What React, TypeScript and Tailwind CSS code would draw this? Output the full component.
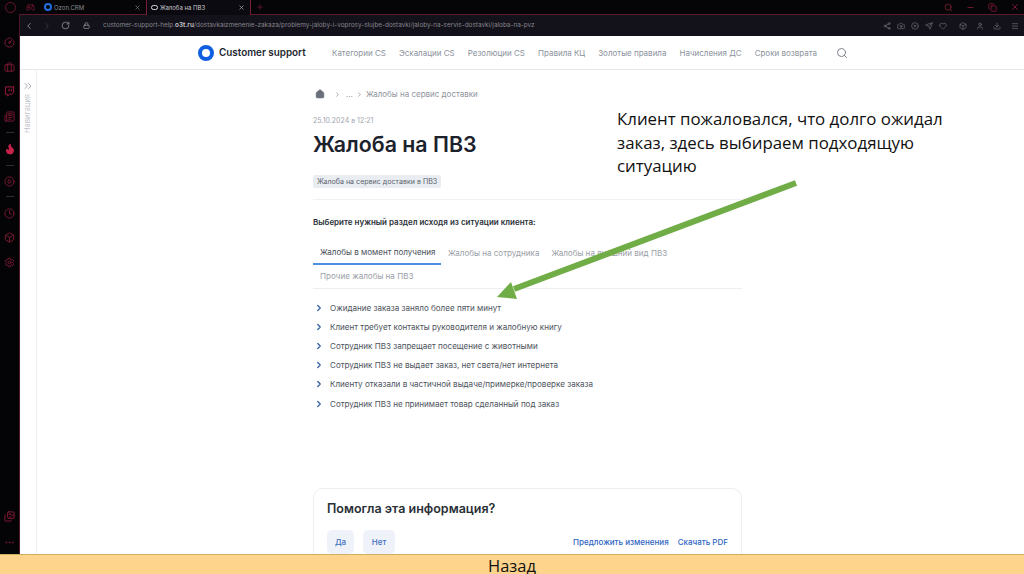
import React from "react";
import { ChevronLeft, ChevronRight, RotateCw, Lock, Search, Share2, Camera, CircleX, Send, Heart, Box, User, Download, Menu, X, Minus, Copy, Plus, Home, ChevronsRight, CircleGauge, Briefcase, Twitch, Newspaper, Flame, CirclePlay, Clock, Settings, Gamepad2, Images, Ellipsis } from "lucide-react";

const nav = ["Категории CS", "Эскалации CS", "Резолюции CS", "Правила КЦ", "Золотые правила", "Начисления ДС", "Сроки возврата"];
const items = [
  "Ожидание заказа заняло более пяти минут",
  "Клиент требует контакты руководителя и жалобную книгу",
  "Сотрудник ПВЗ запрещает посещение с животными",
  "Сотрудник ПВЗ не выдает заказ, нет света/нет интернета",
  "Клиенту отказали в частичной выдаче/примерке/проверке заказа",
  "Сотрудник ПВЗ не принимает товар сделанный под заказ",
];

function Rail() {
  const c = "text-[#7d1a33]";
  return (
    <div className="w-[20px] shrink-0 bg-[#040406] border-r border-[#4a1a2a] flex flex-col items-center pt-[23px]">
      <CircleGauge size={11} className={c} />
      <Briefcase size={11} className={`${c} mt-[13.5px]`} />
      <Twitch size={11} className="text-[#a81c40] mt-[13px]" />
      <Newspaper size={11} className={`${c} mt-[14px]`} />
      <div className="w-[8px] h-px bg-[#2e2e33] mt-[10px]" />
      <Flame size={12} className="text-[#c8234a] fill-[#c8234a] mt-[10px]" />
      <div className="w-[8px] h-px bg-[#2e2e33] mt-[10px]" />
      <CirclePlay size={11} className={`${c} mt-[10px]`} />
      <div className="w-[8px] h-px bg-[#2e2e33] mt-[9.5px]" />
      <Clock size={11} className={`${c} mt-[11px]`} />
      <Box size={11} className={`${c} mt-[13px]`} />
      <Settings size={11} className={`${c} mt-[14px]`} />
      <div className="flex-1" />
      <Images size={11} className="text-[#8a1a36]" />
      <Ellipsis size={11} className={`${c} mt-[15px] mb-[6px]`} />
    </div>
  );
}

export default function App() {
  return (
    <div className="relative w-[1024px] h-[574px] overflow-hidden flex flex-col bg-white font-['Inter',sans-serif]">
      {/* tab strip */}
      <div className="h-[14px] shrink-0 bg-[#050507] flex items-stretch">
        <div className="w-[20px] flex items-center justify-center">
          <div className="w-[11px] h-[11px] rounded-full border border-[#6b1528]" />
        </div>
        <div className="w-[21px] flex items-center justify-center">
          <Gamepad2 size={9} className="text-[#8a1a36]" />
        </div>
        <div className="w-[105px] flex items-center pl-[3px] pr-[5px]">
          <div className="w-[8px] h-[8px] rounded-full border-2 border-[#1f6fe0]" />
          <span className="ml-[2px] text-[6px] text-[#8a8a90] flex-1">Ozon.CRM</span>
          <X size={7} className="text-[#8a8a90]" />
        </div>
        <div className="w-[105px] flex items-center pl-[4px] pr-[5px] border-x border-[#7a1c33] bg-[#0b0a10] -mb-px relative">
          <div className="w-[7px] h-[5px] rounded-full border border-[#d8d8d8]" />
          <span className="ml-[2px] text-[6px] text-[#c8c8cc] flex-1">Жалоба на ПВЗ</span>
          <X size={7} className="text-[#c8c8cc]" />
        </div>
        <div className="w-[17px] flex items-center justify-center">
          <Plus size={8} className="text-[#7d1a33]" />
        </div>
        <div className="flex-1" />
        <div className="flex items-center gap-[13px] pr-[4px] text-[#8f1d3a]">
          <Search size={9} />
          <Minus size={9} />
          <Copy size={9} />
          <X size={10} />
        </div>
      </div>
      <div className="flex-1 flex min-h-0">
        <Rail />
        <div className="flex-1 flex flex-col min-w-0">
          {/* address bar */}
          <div className="h-[22px] shrink-0 bg-[#13111a] border-t border-[#5c1a2c] flex items-center pl-[4px] pr-[5px]">
            <ChevronLeft size={10} className="text-[#9a9aa0]" />
            <ChevronRight size={10} className="text-[#3f3f46] ml-[8px]" />
            <RotateCw size={9} className="text-[#9a9aa0] ml-[9px]" />
            <Lock size={7} className="text-[#b0b0b4] ml-[13px]" />
            <span className="ml-[13px] text-[6.4px] text-[#85858c] whitespace-nowrap">customer-support-help.<b className="text-[#c8c8cc] font-semibold">o3t.ru</b>/dostavkaizmenenie-zakaza/problemy-jaloby-i-voprosy-slujbe-dostavki/jaloby-na-servis-dostavki/jaloba-na-pvz</span>
            <div className="flex-1" />
            <div className="flex items-center text-[#6f6f78] gap-[6px]">
              <Share2 size={8} />
              <Camera size={8} />
              <CircleX size={8} />
              <Send size={8} />
              <Heart size={8} />
              <Box size={8} className="ml-[6px]" />
              <User size={8} className="ml-[3px]" />
              <Download size={8} className="ml-[3px]" />
              <Menu size={8} className="ml-[4px]" />
            </div>
          </div>
          {/* site header */}
          <div className="h-[34px] shrink-0 border-b border-[#e6e8ec] flex items-center pl-[178px]">
            <div className="w-[16px] h-[16px] rounded-full border-[4px] border-[#0f5fe0]" />
            <span className="ml-[5px] w-[113px] text-[9.9px] font-semibold text-[#23272f]">Customer support</span>
            <div className="flex text-[8px] text-[#8b929c] gap-[13px]">
              {nav.map((n) => <span key={n}>{n}</span>)}
            </div>
            <Search size={12} className="ml-[19px] text-[#7d838c]" />
          </div>
          <div className="flex-1 flex min-h-0">
            {/* navigation collapse */}
            <div className="w-[17px] shrink-0 border-r border-[#eceef1] flex flex-col items-center pt-[10px]">
              <ChevronsRight size={12} className="text-[#a4a8ae]" />
              <span className="mt-[2px] text-[7.5px] text-[#c0c3c8] [writing-mode:vertical-rl] rotate-180">Навигация</span>
            </div>
            {/* article */}
            <div className="flex-1 min-w-0 pl-[276px] overflow-hidden">
              <div className="w-[429px]">
                <div className="flex items-center h-[14px] mt-[17px] text-[8px] text-[#8f959e]">
                  <Home size={10} className="ml-[2px] text-[#6a7079] fill-[#6a7079]" />
                  <ChevronRight size={7} className="ml-[9px] text-[#70767f]" />
                  <span className="ml-[5px]">...</span>
                  <ChevronRight size={7} className="ml-[3px] text-[#70767f]" />
                  <span className="ml-[3px]">Жалобы на сервис доставки</span>
                </div>
                <div className="mt-[15px] text-[7px] leading-[10px] text-[#a0a5ac]">25.10.2024 в 12:21</div>
                <h1 className="mt-[3px] text-[21.35px] leading-[30px] font-semibold text-[#1c222b]">Жалоба на ПВЗ</h1>
                <div className="mt-[16px] w-fit bg-[#e9edf2] rounded-[2px] px-[4px] text-[7.1px] leading-[13px] text-[#5c636d]">Жалоба на сервис доставки в ПВЗ</div>
                <div className="mt-[11px] h-px bg-[#f0f1f3]" />
                <div className="mt-[16px] text-[8px] leading-[12px] font-semibold text-[#2a2f37]">Выберите нужный раздел исходя из ситуации клиента:</div>
                {/* tabs */}
                <div className="mt-[13px] border-b border-[#eceef1] flex flex-wrap text-[8.05px] text-[#9ba0a8]">
                  <div className="w-[128px] h-[24px] border-b-2 border-[#4f8fe3] pl-[7px] flex items-center text-[#4a5059]">Жалобы в момент получения</div>
                  <div className="h-[24px] pl-[7px] pr-[6px] flex items-center">Жалобы на сотрудника</div>
                  <div className="h-[24px] pl-[6px] flex items-center">Жалобы на внешний вид ПВЗ</div>
                  <div className="w-full h-[23px] pl-[7px] flex items-center">Прочие жалобы на ПВЗ</div>
                </div>
                {/* list */}
                <div className="mt-[9px] flex flex-col">
                  {items.map((t) => (
                    <div key={t} className="h-[19.2px] flex items-center text-[8.05px] text-[#4d535c]">
                      <ChevronRight size={10} strokeWidth={3} className="ml-[1px] text-[#33609f]" />
                      <span className="ml-[6px]">{t}</span>
                    </div>
                  ))}
                </div>
                {/* feedback */}
                <div className="mt-[75px] border border-[#eceef1] rounded-[10px] pl-[13px] pr-[13px] pt-[12px] h-[80px]">
                  <div className="text-[12.5px] leading-[16px] font-semibold text-[#2a2f37]">Помогла эта информация?</div>
                  <div className="mt-[13px] flex items-center">
                    <div className="w-[27px] h-[24px] rounded-[5px] bg-[#eff2f8] flex items-center justify-center text-[8px] font-medium text-[#3f6fc0]">Да</div>
                    <div className="ml-[9px] w-[32px] h-[24px] rounded-[5px] bg-[#eff2f8] flex items-center justify-center text-[8px] font-medium text-[#3f6fc0]">Нет</div>
                    <div className="flex-1" />
                    <span className="text-[8px] font-medium text-[#2f66c4]">Предложить изменения</span>
                    <span className="ml-[9px] text-[8px] font-medium text-[#2f66c4]">Скачать PDF</span>
                  </div>
                </div>
              </div>
            </div>
          </div>
        </div>
      </div>
      {/* bottom bar */}
      <div className="h-[20px] shrink-0 bg-[#fed48d] border-t border-[#c9b066] flex items-start justify-center pt-[3px] text-[16.5px] leading-[16px] text-[#111] font-['Open_Sans',sans-serif]">
        Назад
      </div>
      {/* annotation overlay */}
      <div className="absolute left-[617px] top-[107px] w-[345px] text-[16.85px] leading-[23.5px] text-[#111] font-['Open_Sans',sans-serif]">
        Клиент пожаловался, что долго ожидал заказ, здесь выбираем подходящую ситуацию
      </div>
      <svg className="absolute left-0 top-0 pointer-events-none" width="1024" height="574" viewBox="0 0 1024 574">
        <path d="M796 183 L514 289" stroke="#70ad47" strokeWidth="6" fill="none" />
        <path d="M497 297 L511 282 L517 299 Z" fill="#70ad47" />
      </svg>
    </div>
  );
}
